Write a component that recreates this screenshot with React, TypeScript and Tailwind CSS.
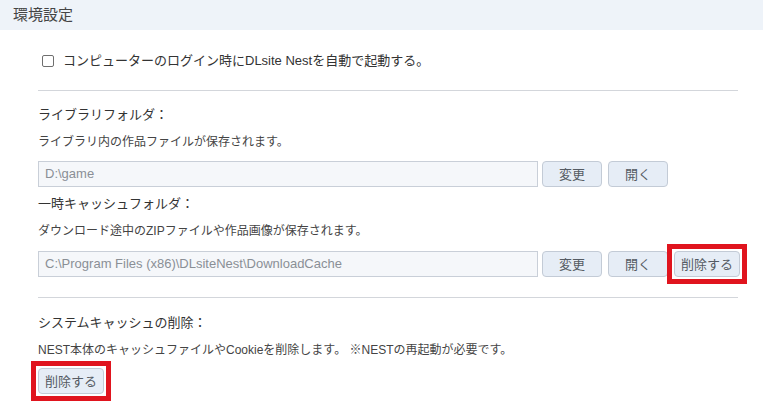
import type { ReactNode } from "react";

const font = { fontFamily: '"Liberation Sans", "Noto Sans CJK JP", sans-serif' };

function Btn({ children, wide = true }: { children: ReactNode; wide?: boolean }) {
  return (
    <button
      type="button"
      className={
        "h-[26px] shrink-0 whitespace-nowrap rounded-[4px] border border-[#c3cbd6] bg-[#e6edf6] px-[6px] text-[13px] leading-none text-[#555b63] " +
        (wide ? "min-w-[60px]" : "")
      }
    >
      {children}
    </button>
  );
}

// red annotation box drawn over the button
function Marked({ children }: { children: ReactNode }) {
  return (
    <span className="relative inline-flex shrink-0">
      {children}
      <span className="pointer-events-none absolute -inset-[7px] border-[5px] border-[#e0141e]" />
    </span>
  );
}

function PathInput({ value }: { value: string }) {
  return (
    <div className="flex h-[26px] w-[500px] shrink-0 items-center border border-[#c9cfd8] bg-[#f5f7fa] px-[6px] text-[13px] text-[#8a8f96]">
      {value}
    </div>
  );
}

export default function App() {
  return (
    <div className="h-[413px] w-[763px] overflow-hidden bg-white text-[#333]" style={font}>
      <header className="flex h-[30px] items-center bg-[#eef3f9] px-[13px] text-[15px] text-[#444]">
        環境設定
      </header>

      <div className="pl-[38px]">
        <label className="mt-[21px] flex h-[20px] items-center gap-[9px] pl-[4px] text-[13px] text-[#333]">
          <span className="h-[12px] w-[12px] rounded-[2px] border border-[#6f6f6f] bg-white" />
          コンピューターのログイン時にDLsite Nestを自動で起動する。
        </label>

        <div className="mt-[19px] h-px w-[700px] bg-[#d3d6db]" />

        <div className="mt-[14px] h-[20px] text-[13px] leading-[20px]">ライブラリフォルダ：</div>
        <div className="mt-[7px] h-[20px] text-[12px] leading-[20px] text-[#444]">
          ライブラリ内の作品ファイルが保存されます。
        </div>
        <div className="mt-[9px] flex items-center gap-[4px]">
          <PathInput value="D:\game" />
          <Btn>変更</Btn>
          <span className="ml-[2px] flex">
            <Btn>開く</Btn>
          </span>
        </div>

        <div className="mt-[7px] h-[20px] text-[13px] leading-[20px]">一時キャッシュフォルダ：</div>
        <div className="mt-[7px] h-[20px] text-[12px] leading-[20px] text-[#444]">
          ダウンロード途中のZIPファイルや作品画像が保存されます。
        </div>
        <div className="mt-[10px] flex items-center gap-[4px]">
          <PathInput value="C:\Program Files (x86)\DLsiteNest\DownloadCache" />
          <Btn>変更</Btn>
          <span className="ml-[2px] flex">
            <Btn>開く</Btn>
          </span>
          <span className="ml-[2px] flex">
            <Marked>
              <Btn wide={false}>削除する</Btn>
            </Marked>
          </span>
        </div>

        <div className="mt-[20px] h-px w-[700px] bg-[#d3d6db]" />

        <div className="mt-[15px] h-[20px] text-[13px] leading-[20px]">システムキャッシュの削除：</div>
        <div className="mt-[7px] h-[20px] text-[12px] leading-[20px] text-[#444]">
          NEST本体のキャッシュファイルやCookieを削除します。 ※NESTの再起動が必要です。
        </div>
        <div className="mt-[8px] flex">
          <Marked>
            <Btn wide={false}>削除する</Btn>
          </Marked>
        </div>
      </div>
    </div>
  );
}
